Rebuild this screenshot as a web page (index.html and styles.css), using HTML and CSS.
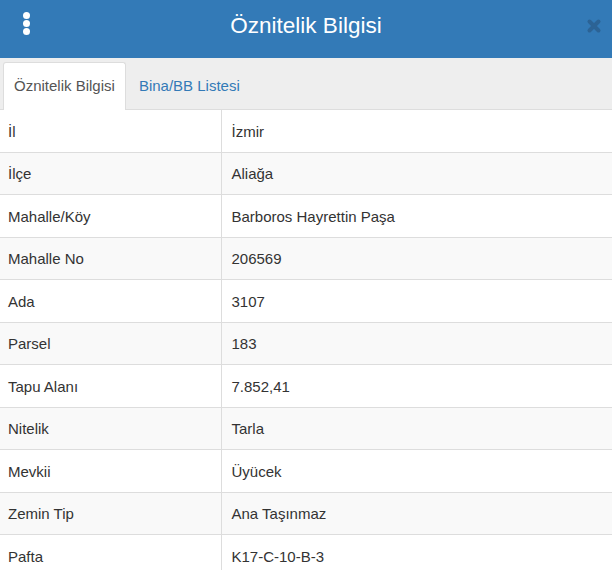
FILE: index.html
```html
<!DOCTYPE html>
<html lang="tr">
<head>
<meta charset="utf-8">
<link rel="stylesheet" href="styles.css">
</head>
<body>
<div class="panel">
  <header class="head">
    <span class="kebab"><i></i><i></i><i></i></span>
    <h1 class="title">Öznitelik Bilgisi</h1>
    <svg class="close" width="16" height="16" viewBox="0 0 16 16"><path d="M3.5 3.5L12.5 12.5M12.5 3.5L3.5 12.5" stroke="#2c6395" stroke-width="4" stroke-linecap="round"/></svg>
  </header>
  <nav class="tabs">
    <a class="tab active">Öznitelik Bilgisi</a>
    <a class="tab second">Bina/BB Listesi</a>
  </nav>
  <table class="info">
    <tr><td>İl</td><td>İzmir</td></tr>
    <tr><td>İlçe</td><td>Aliağa</td></tr>
    <tr><td>Mahalle/Köy</td><td>Barboros Hayrettin Paşa</td></tr>
    <tr><td>Mahalle No</td><td>206569</td></tr>
    <tr><td>Ada</td><td>3107</td></tr>
    <tr><td>Parsel</td><td>183</td></tr>
    <tr><td>Tapu Alanı</td><td>7.852,41</td></tr>
    <tr><td>Nitelik</td><td>Tarla</td></tr>
    <tr><td>Mevkii</td><td>Üyücek</td></tr>
    <tr><td>Zemin Tip</td><td>Ana Taşınmaz</td></tr>
    <tr><td>Pafta</td><td>K17-C-10-B-3</td></tr>
  </table>
</div>
</body>
</html>
```
FILE: styles.css
```css
* { box-sizing: border-box; }
html, body { margin: 0; padding: 0; background: #fff; }
body { font-family: "Liberation Sans", Arial, sans-serif; color: #333; font-size: 15px; overflow: hidden; }
.panel { width: 612px; }
.head {
  height: 58px; background: #337ab7; display: flex; align-items: center;
  justify-content: center; position: relative;
}
.title { margin: 0; font-weight: normal; font-size: 22.5px; color: #fff; padding-bottom: 7px; }
.kebab { position: absolute; left: 23px; top: 12px; display: flex; flex-direction: column; gap: 1px; }
.kebab i { display: block; width: 7px; height: 7px; border-radius: 50%; background: #fff; }
.close { position: absolute; right: 10px; top: 18px; }
.tabs {
  display: flex; background: #eee; padding: 4px 3px 0; border-bottom: 1px solid #ddd;
  height: 52px;
}
.tab {
  display: flex; align-items: center; padding: 0 10px 2px 10px; color: #337ab7;
  border: 1px solid transparent; border-bottom: none; margin-bottom: -1px;
  line-height: 20px;
}
.tab.second { margin-left: 2px; }
.tab.active { background: #fff; color: #555; border-color: #ddd; border-radius: 3px 3px 0 0; }
.info { width: 100%; border-collapse: collapse; }
.info td {
  padding: 10.5px 10px 9.5px 8px; line-height: 21.5px; border-bottom: 1px solid #ddd;
  vertical-align: middle;
}
.info td:first-child { width: 221px; border-right: 1px solid #ddd; }
.info td:last-child { padding-left: 10px; }
.info tr:nth-child(even) td { background: #f9f9f9; }
```
